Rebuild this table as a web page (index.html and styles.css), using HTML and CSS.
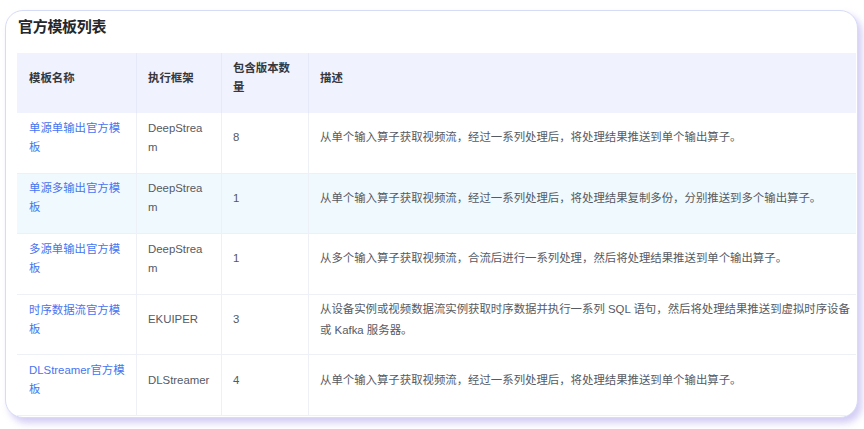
FILE: index.html
```html
<!DOCTYPE html>
<html lang="zh-CN">
<head>
<meta charset="utf-8">
<title>官方模板列表</title>
<link rel="stylesheet" href="styles.css">
</head>
<body>
<div class="page">
  <section class="card">
    <h2 class="card-title">官方模板列表</h2>
    <div class="table">
      <div class="row head">
        <div class="cell c1">模板名称</div>
        <div class="cell c2">执行框架</div>
        <div class="cell c3">包含版本数量</div>
        <div class="cell c4">描述</div>
      </div>
      <div class="row">
        <div class="cell c1"><a class="link">单源单输出官方模板</a></div>
        <div class="cell c2">DeepStream</div>
        <div class="cell c3">8</div>
        <div class="cell c4">从单个输入算子获取视频流，经过一系列处理后，将处理结果推送到单个输出算子。</div>
      </div>
      <div class="row hl">
        <div class="cell c1"><a class="link">单源多输出官方模板</a></div>
        <div class="cell c2">DeepStream</div>
        <div class="cell c3">1</div>
        <div class="cell c4">从单个输入算子获取视频流，经过一系列处理后，将处理结果复制多份，分别推送到多个输出算子。</div>
      </div>
      <div class="row">
        <div class="cell c1"><a class="link">多源单输出官方模板</a></div>
        <div class="cell c2">DeepStream</div>
        <div class="cell c3">1</div>
        <div class="cell c4">从多个输入算子获取视频流，合流后进行一系列处理，然后将处理结果推送到单个输出算子。</div>
      </div>
      <div class="row">
        <div class="cell c1"><a class="link">时序数据流官方模板</a></div>
        <div class="cell c2">EKUIPER</div>
        <div class="cell c3">3</div>
        <div class="cell c4">从设备实例或视频数据流实例获取时序数据并执行一系列 SQL 语句，然后将处理结果推送到虚拟时序设备或 Kafka 服务器。</div>
      </div>
      <div class="row">
        <div class="cell c1"><a class="link">DLStreamer官方模板</a></div>
        <div class="cell c2 nowrap">DLStreamer</div>
        <div class="cell c3">4</div>
        <div class="cell c4">从单个输入算子获取视频流，经过一系列处理后，将处理结果推送到单个输出算子。</div>
      </div>
    </div>
  </section>
</div>
</body>
</html>
```

FILE: styles.css
```css
* { box-sizing: border-box; }
html, body {
  margin: 0;
  padding: 0;
  background: #ffffff;
}
body {
  font-family: "Liberation Sans", "Noto Sans CJK SC", sans-serif;
  color: #555a63;
  width: 864px;
  height: 429px;
  overflow: hidden;
}
.page {
  padding: 10px 6px 0 5px;
}
.card {
  height: 408px;
  border: 1px solid #d6dcf6;
  border-radius: 18px;
  background: #fff;
  box-shadow: 4px 5px 7px rgba(196, 188, 240, 0.75);
  padding: 5px 1px 0 11px;
  overflow: hidden;
}
.card-title {
  margin: 0;
  font-size: 15px;
  line-height: 22px;
  font-weight: 700;
  color: #25272c;
  padding-left: 1px;
  letter-spacing: -0.3px;
}
.table {
  margin-top: 15px;
  font-size: 11.4px;
}
.row {
  display: grid;
  grid-template-columns: 120px 85px 87px 1fr;
  height: 60.6px;
  border-bottom: 1px solid #eef0f7;
}
.row.head {
  height: 60px;
  background: #f0f2fd;
  border-bottom: none;
  font-weight: 700;
  color: #34373d;
}
.row.hl {
  background: #f0f9fd;
}
.cell {
  display: flex;
  align-items: center;
  padding: 0 11px 10px 11px;
  line-height: 19px;
  word-break: break-all;
  border-right: 1px solid #eef0f7;
}
.cell.c1 { padding-left: 12px; padding-right: 10px; }
.cell.c2 { padding-right: 12px; }
.cell.nowrap { white-space: nowrap; }
.cell.c4 {
  border-right: none;
  padding-right: 4px;
  line-height: 21px;
}
.head .cell { border-right-color: #e6e9f8; }
.link {
  color: #4775ef;
  text-decoration: none;
}
```
